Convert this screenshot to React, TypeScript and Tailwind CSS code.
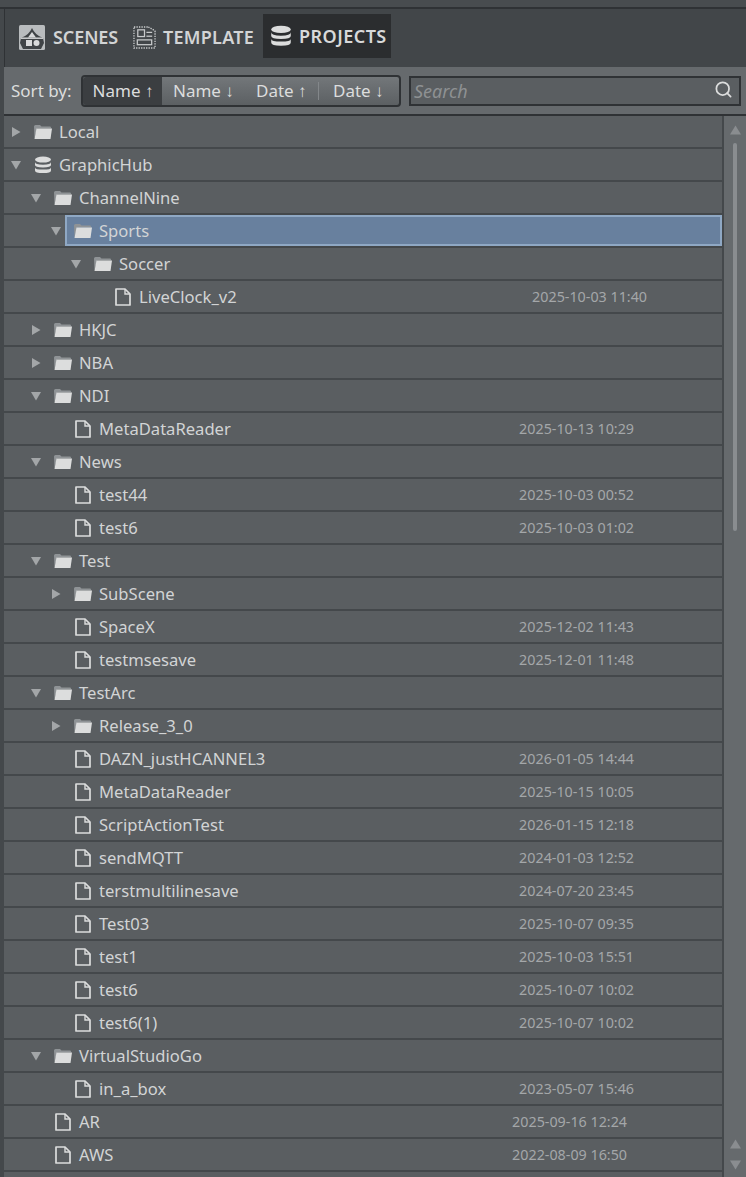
import { Search } from "lucide-react";

type Row = {
  depth: number;
  name: string;
  kind: "folder" | "file" | "db";
  open?: boolean;
  date?: string;
  selected?: boolean;
};

const rows: Row[] = [
  { depth: 0, name: "Local", kind: "folder", open: false },
  { depth: 0, name: "GraphicHub", kind: "db", open: true },
  { depth: 1, name: "ChannelNine", kind: "folder", open: true },
  { depth: 2, name: "Sports", kind: "folder", open: true, selected: true },
  { depth: 3, name: "Soccer", kind: "folder", open: true },
  { depth: 4, name: "LiveClock_v2", kind: "file", date: "2025-10-03 11:40" },
  { depth: 1, name: "HKJC", kind: "folder", open: false },
  { depth: 1, name: "NBA", kind: "folder", open: false },
  { depth: 1, name: "NDI", kind: "folder", open: true },
  { depth: 2, name: "MetaDataReader", kind: "file", date: "2025-10-13 10:29" },
  { depth: 1, name: "News", kind: "folder", open: true },
  { depth: 2, name: "test44", kind: "file", date: "2025-10-03 00:52" },
  { depth: 2, name: "test6", kind: "file", date: "2025-10-03 01:02" },
  { depth: 1, name: "Test", kind: "folder", open: true },
  { depth: 2, name: "SubScene", kind: "folder", open: false },
  { depth: 2, name: "SpaceX", kind: "file", date: "2025-12-02 11:43" },
  { depth: 2, name: "testmsesave", kind: "file", date: "2025-12-01 11:48" },
  { depth: 1, name: "TestArc", kind: "folder", open: true },
  { depth: 2, name: "Release_3_0", kind: "folder", open: false },
  { depth: 2, name: "DAZN_justHCANNEL3", kind: "file", date: "2026-01-05 14:44" },
  { depth: 2, name: "MetaDataReader", kind: "file", date: "2025-10-15 10:05" },
  { depth: 2, name: "ScriptActionTest", kind: "file", date: "2026-01-15 12:18" },
  { depth: 2, name: "sendMQTT", kind: "file", date: "2024-01-03 12:52" },
  { depth: 2, name: "terstmultilinesave", kind: "file", date: "2024-07-20 23:45" },
  { depth: 2, name: "Test03", kind: "file", date: "2025-10-07 09:35" },
  { depth: 2, name: "test1", kind: "file", date: "2025-10-03 15:51" },
  { depth: 2, name: "test6", kind: "file", date: "2025-10-07 10:02" },
  { depth: 2, name: "test6(1)", kind: "file", date: "2025-10-07 10:02" },
  { depth: 1, name: "VirtualStudioGo", kind: "folder", open: true },
  { depth: 2, name: "in_a_box", kind: "file", date: "2023-05-07 15:46" },
  { depth: 1, name: "AR", kind: "file", date: "2025-09-16 12:24" },
  { depth: 1, name: "AWS", kind: "file", date: "2022-08-09 16:50" },
];

const FolderIcon = () => (
  <svg width="20" height="16" viewBox="0 0 20 16" className="ml-[1px] shrink-0">
    <path d="M1.5 14.5 L1 2.5 Q1 1 2.5 1 L7 1 L8.5 2.5 L17 2.5 Q18 2.5 18 3.5 L18 4.5 L4 4.5 Z" fill="#8f9396" />
    <path d="M3.5 4.5 L19 4.5 L17.5 15 L1.5 15 Z" fill="#dcdddd" />
  </svg>
);

const FileIcon = () => (
  <svg width="16" height="18" viewBox="0 0 16 18" className="ml-[3px] shrink-0">
    <path d="M1 1 L10 1 L15 6 L15 17 L1 17 Z" fill="none" stroke="#dcdddd" strokeWidth="1.7" strokeLinejoin="round" />
    <path d="M10 1 L10 6 L15 6" fill="none" stroke="#dcdddd" strokeWidth="1.4" />
  </svg>
);

const DbIcon = ({ size = 18 }: { size?: number }) => (
  <svg width={size} height={size} viewBox="0 0 18 18" className="shrink-0">
    <ellipse cx="9" cy="3.6" rx="8" ry="3" fill="#dcdddd" />
    <path d="M1 6 Q1 8.8 9 8.8 Q17 8.8 17 6 L17 9 Q17 11.4 9 11.4 Q1 11.4 1 9 Z" fill="#dcdddd" />
    <path d="M1 11.4 Q1 13.6 9 13.6 Q17 13.6 17 11.4 L17 14.4 Q17 17 9 17 Q1 17 1 14.4 Z" fill="#dcdddd" />
  </svg>
);

const ScenesIcon = () => (
  <svg width="26" height="25" viewBox="0 0 26 25" className="shrink-0">
    <rect x="0" y="0" width="26" height="25" rx="1.5" fill="#b9bcbe" />
    <path d="M13 3 Q10 10 2 13 L1 18 L4 24 L22 24 L25 18 L24 13 Q16 10 13 3 Z" fill="#3f4346" />
    <path d="M13 7 L17 12.5 L9 12.5 Z" fill="#d8d9da" />
    <rect x="7" y="15" width="6" height="6" fill="#d8d9da" />
    <circle cx="17.5" cy="18" r="3" fill="#d8d9da" />
    <rect x="2" y="12.5" width="22" height="1.4" fill="#d8d9da" />
  </svg>
);

const TemplateIcon = () => (
  <svg width="23" height="23" viewBox="0 0 24 24" className="shrink-0">
    <path d="M1 1 L16 1 M23 5 L23 23 L1 23 L1 1 M16 1 L23 5" fill="none" stroke="#c9cbcc" strokeWidth="1.4" strokeDasharray="1.4 1.2" />
    <rect x="5" y="4" width="7" height="7" fill="none" stroke="#c9cbcc" strokeWidth="1.3" />
    <rect x="14" y="6" width="6" height="1.3" fill="#c9cbcc" />
    <rect x="14" y="10" width="6" height="1.3" fill="#c9cbcc" />
    <rect x="4.5" y="14.5" width="15" height="5" fill="none" stroke="#c9cbcc" strokeWidth="1.3" />
  </svg>
);

const Arrow = ({ open }: { open: boolean }) =>
  open ? (
    <svg width="12" height="10" viewBox="0 0 12 10" className="shrink-0">
      <path d="M1 1 L11 1 L6 9.5 Z" fill="#a3a6a8" />
    </svg>
  ) : (
    <svg width="10" height="12" viewBox="0 0 10 12" className="shrink-0">
      <path d="M1 1 L9.5 6 L1 11 Z" fill="#a3a6a8" />
    </svg>
  );

const dateMargin: Record<number, string> = {
  1: "mr-[95px]",
  2: "mr-[88px]",
  4: "mr-[75px]",
};

function TreeRow({ row }: { row: Row }) {
  const indent = row.depth * 20;
  return (
    <div className="flex h-[33px] items-stretch border-b-2 border-[#44484b]">
      <div className="flex min-w-0 flex-1 items-center" style={{ paddingLeft: indent }}>
        <div className="flex w-[28px] shrink-0 items-center justify-center pl-[1px] pr-[5px] pt-[1px]">
          {row.open !== undefined && <Arrow open={row.open} />}
        </div>
        <div
          className={
            row.selected
              ? "-ml-[7px] flex h-[31px] flex-1 items-center border-2 border-[#8fa8c4] bg-[#68809e] pl-[5px] pt-[1px]"
              : "flex flex-1 items-center pt-[1px]"
          }
        >
          <div className="flex w-[27px] shrink-0 items-center">
            {row.kind === "folder" && <FolderIcon />}
            {row.kind === "file" && <FileIcon />}
            {row.kind === "db" && (
              <span className="ml-[2px]">
                <DbIcon />
              </span>
            )}
          </div>
          <span className="text-[16.6px] leading-none text-[#d2d4d5]">{row.name}</span>
          {row.date && (
            <span className={`ml-auto text-[14.3px] leading-none text-[#a4a7a9] ${dateMargin[row.depth]}`}>
              {row.date}
            </span>
          )}
        </div>
      </div>
    </div>
  );
}

export default function App() {
  return (
    <div className="flex h-screen flex-col overflow-hidden bg-[#44484b] pl-[4px] font-['Noto_Sans','Open_Sans',sans-serif] text-[#d2d4d5]">
      <div className="-ml-[4px] h-[7px] shrink-0 bg-[#484c4f]" />
      <div className="-ml-[4px] h-[2px] shrink-0 bg-[#2f3235]" />

      {/* Tabs */}
      <div className="flex h-[58px] shrink-0 items-center border-l border-[#2f3235] bg-[#424649] pb-[2px] pl-[14px]">
        <div className="flex items-center gap-[8px]">
          <ScenesIcon />
          <span className="text-[18px] font-semibold tracking-[-0.1px] text-[#d2d4d5]">SCENES</span>
        </div>
        <div className="ml-[15px] flex items-center gap-[7px]">
          <TemplateIcon />
          <span className="text-[18px] font-semibold tracking-[0.25px] text-[#d2d4d5]">TEMPLATE</span>
        </div>
        <div className="ml-[9px] -mt-[2px] flex h-[44px] w-[128px] items-center gap-[7px] bg-[#2b2d2f] px-[7px]">
          <DbIcon size={22} />
          <span className="text-[18px] font-semibold tracking-[0.45px] text-[#d8d9da]">PROJECTS</span>
        </div>
      </div>

      {/* Sort bar */}
      <div className="flex h-[49px] shrink-0 items-center border-b-2 border-[#2f3235] bg-[#666a6d] pl-[7px] pr-[5px]">
        <span className="w-[70px] pt-[1px] text-[17px] text-[#dcdddd]">Sort by:</span>
        <div className="flex h-[32px] w-[320px] items-stretch rounded-[4px] border-2 border-[#2f3235] bg-gradient-to-b from-[#73777a] to-[#5c6063] text-[17px] text-[#dcdddd]">
          <div className="flex w-[79px] items-center justify-center rounded-l-[3px] bg-[#3b3e41] pl-[1px] pt-[1px]">Name ↑</div>
          <div className="flex w-[94px] items-center pl-[11px] pt-[1px]">Name ↓</div>
          <div className="my-[5px] flex w-[63px] items-center border-r border-[#83878a]">Date ↑</div>
          <div className="flex flex-1 items-center pl-[14px] pt-[1px]">Date ↓</div>
        </div>
        <div className="ml-[8px] flex h-[30px] flex-1 items-center border-2 border-[#2f3235] bg-[#5a5e61] pl-[3px] pr-[6px]">
          <span className="flex-1 pt-[1px] text-[18px] italic text-[#8e9193]">Search</span>
          <Search size={19} strokeWidth={2.2} className="-mt-[3px] text-[#dcdddd]" />
        </div>
      </div>

      {/* Tree */}
      <div className="flex min-h-0 flex-1">
        <div className="min-w-0 flex-1 overflow-hidden bg-[#5a5e61]">
          {rows.map((row, i) => (
            <TreeRow key={i} row={row} />
          ))}
          <div className="h-[33px]" />
        </div>
        <div className="flex w-[24px] shrink-0 flex-col items-center border-l-2 border-[#44484b] bg-[#666a6d] pt-[9px] pb-[7px]">
          <svg width="11" height="10" viewBox="0 0 12 10" className="shrink-0">
            <path d="M6 0 L12 10 L0 10 Z" fill="#8a8d90" />
          </svg>
          <div className="mt-[8px] h-[388px] w-[4px] rounded-full bg-[#8a8d90]" />
          <div className="flex-1" />
          <svg width="11" height="10" viewBox="0 0 12 10" className="shrink-0">
            <path d="M6 0 L12 10 L0 10 Z" fill="#8a8d90" />
          </svg>
          <svg width="11" height="10" viewBox="0 0 12 10" className="mt-[11px] shrink-0">
            <path d="M0 0 L12 0 L6 10 Z" fill="#8a8d90" />
          </svg>
        </div>
      </div>
    </div>
  );
}
